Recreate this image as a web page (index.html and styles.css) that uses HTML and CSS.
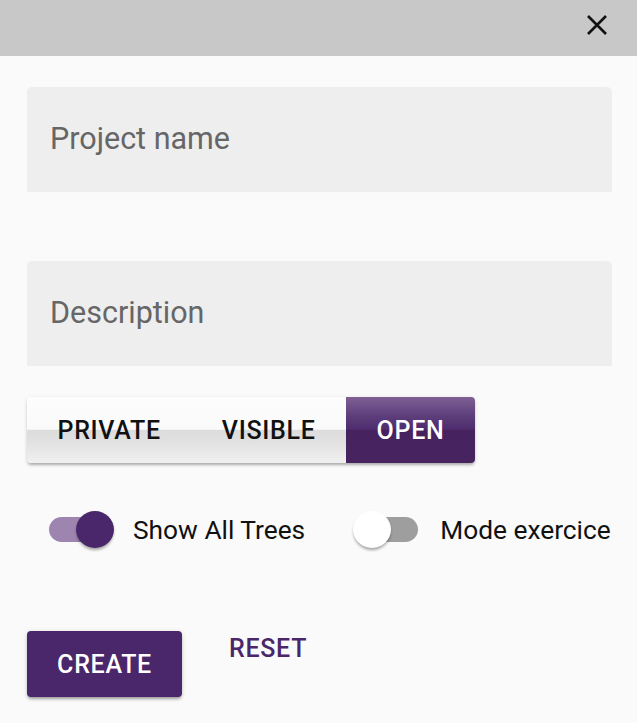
FILE: index.html
```html
<!DOCTYPE html>
<html>
<head>
<meta charset="utf-8">
<link rel="stylesheet" href="styles.css">
</head>
<body>
<div class="dialog">
  <div class="header">
    <svg class="close" width="22" height="22" viewBox="0 0 22 22"><path d="M2 2 L20 20 M20 2 L2 20" stroke="#111" stroke-width="2.6" fill="none"/></svg>
  </div>
  <div class="content">
    <div class="field"><span class="label">Project name</span></div>
    <div class="field field-2"><span class="label">Description</span></div>
    <div class="toggle-group">
      <div class="tg-btn">PRIVATE</div>
      <div class="tg-btn">VISIBLE</div>
      <div class="tg-btn active">OPEN</div>
    </div>
    <div class="switches">
      <div class="switch-item">
        <div class="switch on"><div class="track"></div><div class="thumb"></div></div>
        <span class="sw-label">Show All Trees</span>
      </div>
      <div class="switch-item">
        <div class="switch off"><div class="track"></div><div class="thumb"></div></div>
        <span class="sw-label">Mode exercice</span>
      </div>
    </div>
    <div class="actions">
      <div class="btn-create">CREATE</div>
      <div class="btn-reset">RESET</div>
    </div>
  </div>
</div>
</body>
</html>
```
FILE: styles.css
```css
html, body {
  margin: 0;
  padding: 0;
  background: #fafafa;
  font-family: Roboto, "Liberation Sans", sans-serif;
}
.dialog {
  width: 637px;
  height: 723px;
  overflow: hidden;
  background: #fafafa;
}
.header {
  height: 56px;
  background: #c8c8c8;
  display: flex;
  justify-content: flex-end;
  align-items: flex-start;
}
.close {
  margin: 14px 29px 0 0;
}
.content {
  padding: 31px 25px 0 27px;
}
.field {
  height: 105px;
  background: #eeeeee;
  border-radius: 5px 5px 0 0;
  display: flex;
  align-items: center;
  padding-left: 23px;
  box-sizing: border-box;
  padding-bottom: 2px;
}
.field-2 {
  margin-top: 69px;
}
.label {
  font-size: 30.5px;
  color: #666666;
  white-space: nowrap;
}
.toggle-group {
  margin-top: 31px;
  display: inline-flex;
  height: 66px;
  border-radius: 4px;
  overflow: hidden;
  box-shadow: 0 3px 3px -1px rgba(0,0,0,0.25), 0 1px 4px rgba(0,0,0,0.12);
  background: linear-gradient(#fdfdfd 0%, #fafafa 49%, #dcdcdc 50%, #e2e2e2 70%, #f0f0f0 100%);
}
.tg-btn {
  padding: 0 30.5px;
  display: flex;
  align-items: center;
  font-size: 25px;
  font-weight: 500;
  letter-spacing: 0.7px;
  color: #111;
  white-space: nowrap;
}
.tg-btn.active {
  color: #fff;
  background: linear-gradient(#7e6095 0%, #5c3d7a 30%, #4e2c6e 49%, #46225f 50%, #47235f 100%);
}
.switches {
  margin-top: 47px;
  display: flex;
  align-items: center;
  padding-left: 22px;
  height: 40px;
}
.switch-item {
  display: flex;
  align-items: center;
  flex-shrink: 0;
}
.switch-item + .switch-item {
  margin-left: 48px;
}
.switch {
  position: relative;
  width: 65px;
  height: 38px;
  flex-shrink: 0;
}
.track {
  position: absolute;
  top: 6px;
  height: 25px;
  width: 61px;
  border-radius: 13px;
}
.thumb {
  position: absolute;
  top: 0;
  width: 38px;
  height: 37px;
  border-radius: 50%;
  box-shadow: 0 3px 3px -1px rgba(0,0,0,0.25), 0 2px 3px rgba(0,0,0,0.12);
}
.switch.on .track { left: 0; background: #9d85af; }
.switch.on .thumb { right: 0; background: #4a266a; }
.switch.off .track { right: 0; background: #9e9e9e; }
.switch.off .thumb { left: 0; background: #ffffff; }
.sw-label {
  font-size: 26.3px;
  color: #111;
  margin-left: 19px;
  white-space: nowrap;
}
.switch.off + .sw-label {
  margin-left: 22px;
}
.actions {
  margin-top: 81px;
  display: flex;
  align-items: flex-start;
}
.btn-create {
  width: 155px;
  height: 66px;
  box-sizing: border-box;
  background: #4a266a;
  color: #fff;
  border-radius: 4px;
  display: flex;
  align-items: center;
  justify-content: center;
  font-size: 25px;
  font-weight: 500;
  letter-spacing: 0.7px;
  box-shadow: 0 3px 3px -1px rgba(0,0,0,0.3), 0 1px 5px rgba(0,0,0,0.15);
}
.btn-reset {
  margin-left: 47px;
  margin-top: 3px;
  font-size: 25px;
  font-weight: 500;
  letter-spacing: 0.7px;
  color: #4a266a;
}
```
